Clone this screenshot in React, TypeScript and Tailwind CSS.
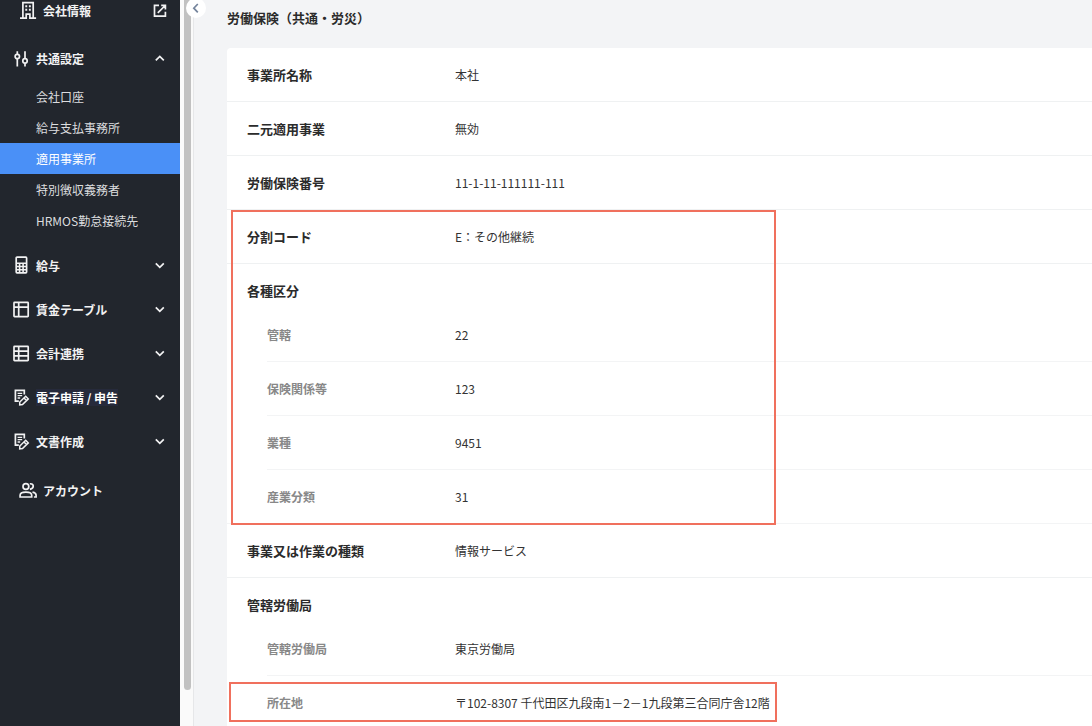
import React from 'react';

type IconProps = { children: React.ReactNode; className?: string };

const Icon: React.FC<IconProps> = ({ children, className = 'size-4' }) => (
  <svg
    viewBox="0 0 16 16"
    fill="none"
    stroke="currentColor"
    strokeWidth="1.7"
    aria-hidden="true"
    className={`shrink-0 overflow-visible ${className}`}
  >
    {children}
  </svg>
);

const BuildingIcon = () => (
  <Icon>
    <path d="M2.9 15V-.4h10.3V15M0 15.2h6.2v-4.1h3.7v4.1h6.2" />
    <path d="M5.3 3.2h1.9M8.9 3.2h1.9M5.3 6.8h1.9M8.9 6.8h1.9" strokeWidth="2" />
  </Icon>
);

const ExternalIcon = () => (
  <Icon>
    <path d="M7 2.3H2.5v10.9h10.9V8.7M9.2 2.3h4.2v4.2M13.2 2.5 5.8 9.9" />
  </Icon>
);

const TuneIcon = () => (
  <Icon>
    <path d="M4.3.3v2.9M4.3 8v7.4M12 .3v7.2M12 12.3v3.1" />
    <circle cx="4.3" cy="5.5" r="2.2" />
    <circle cx="12" cy="9.9" r="2.2" />
  </Icon>
);

const CalculatorIcon = () => (
  <Icon>
    <rect x="3.2" y="-.8" width="10.4" height="15.6" rx=".8" />
    <path d="M3 5.2h10.6M3 8.5h10.6M3 11.7h10.6M6.6 5.2v9.6M10.1 5.2v9.6" strokeWidth="1.6" />
  </Icon>
);

const TableIcon = () => (
  <Icon>
    <rect x="1" y=".4" width="14.2" height="14.2" rx=".6" />
    <path d="M1 5.1h14.2M5.7.4v14.2" />
  </Icon>
);

const ListIcon = () => (
  <Icon>
    <rect x="1" y=".4" width="14.2" height="14.2" rx=".6" />
    <path d="M1 5.1h14.2M1 9.8h14.2M5.7.4v14.2" />
  </Icon>
);

const DocumentIcon = () => (
  <Icon>
    <path d="M11.3 4.4V.4H2.4v10.7h3.4" />
    <path d="M4.6 3.4h4.6M4.6 5.7h4.6M4.6 8h2.6" strokeWidth="1.3" />
    <path d="m6.7 15 .1-3 5.9-5.7 2.6 2.6-5.8 5.7L6.7 15ZM11 8l2.5 2.5" strokeWidth="1.5" />
  </Icon>
);

const PeopleIcon = () => (
  <Icon>
    <circle cx="5.9" cy="3.5" r="2.9" />
    <path d="M.1 14v-1.7c0-2 3-3.1 5.8-3.1s5.8 1.1 5.8 3.1V14H.1Z" />
    <path d="M9.9.9c3.9-1 5 4.4 0 5.4M12.5 9.2c2.4.5 3.6 1.5 3.6 3V14h-2.2" />
  </Icon>
);

const Chevron = ({ up = false }: { up?: boolean }) => (
  <Icon>{up ? <path d="m3.8 9.4 4-4 4 4" /> : <path d="m3.8 5.4 4 4 4-4" />}</Icon>
);

const subItems = ['会社口座', '給与支払事務所', '適用事業所', '特別徴収義務者', 'HRMOS勤怠接続先'];

const menus = [
  { label: '給与', icon: <CalculatorIcon /> },
  { label: '賃金テーブル', icon: <TableIcon /> },
  { label: '会計連携', icon: <ListIcon /> },
  { label: '電子申請 / 申告', icon: <DocumentIcon />, highlighted: true },
  { label: '文書作成', icon: <DocumentIcon /> },
];

const Sidebar = () => (
  <nav className="w-[180px] shrink-0 bg-[#22262d] text-xs text-[#f2f2f3]">
    <a href="#company" className="flex h-[22px] items-center gap-[7px] pl-5 pr-3 font-bold">
      <BuildingIcon />
      <span className="flex-1">会社情報</span>
      <ExternalIcon />
    </a>
    <button type="button" aria-expanded="true" className="mt-[15px] flex h-11 w-full items-center gap-[7px] pl-[13px] pr-3 text-left font-bold">
      <TuneIcon />
      <span className="flex-1">共通設定</span>
      <Chevron up />
    </button>
    <ul>
      {subItems.map((item) => (
        <li key={item}>
          <a
            href="#office"
            className={`flex h-[31px] items-center pl-9 ${item === '適用事業所' ? 'bg-[#4a90f7] text-white' : 'text-[#dcdddf]'}`}
          >
            {item}
          </a>
        </li>
      ))}
    </ul>
    <div className="pt-2">
      {menus.map(({ label, icon, highlighted }) => (
        <button key={label} type="button" aria-expanded="false" className="flex h-11 w-full items-center gap-[7px] pl-[13px] pr-3 text-left font-bold">
          {icon}
          <span className="flex-1">
            <span className={highlighted ? 'bg-[#262a3b] text-white' : ''}>{label}</span>
          </span>
          <Chevron />
        </button>
      ))}
    </div>
    <a href="#account" className="mt-[5px] flex h-11 items-center gap-[7px] pl-5 pr-3 font-bold">
      <PeopleIcon />
      アカウント
    </a>
  </nav>
);

const Row = ({ label, value }: { label: string; value: string }) => (
  <dl className="flex h-[54px] items-center border-b border-[#eff1f2] pl-5">
    <dt className="w-52 shrink-0 text-[13px] font-bold">{label}</dt>
    <dd className="text-xs text-[#333]">{value}</dd>
  </dl>
);

const SubRow = ({ label, value, last = false }: { label: string; value: string; last?: boolean }) => (
  <dl className={`ml-10 flex h-[54px] items-center border-b text-xs ${last ? 'border-transparent' : 'border-[#f3f4f5]'}`}>
    <dt className="w-[188px] shrink-0 font-bold text-[#888]">{label}</dt>
    <dd className="whitespace-nowrap text-[#333]">{value}</dd>
  </dl>
);

const GroupTitle = ({ children }: { children: React.ReactNode }) => (
  <h2 className="flex h-11 items-center pl-5 pt-[10px] text-[13px] font-bold">{children}</h2>
);

const App: React.FC = () => {
  return (
    <div className="flex h-screen overflow-hidden bg-[#f3f4f6] font-['Noto_Sans_CJK_JP','Noto_Sans',sans-serif] text-[#2b2b2b]" lang="ja">
      <Sidebar />

      {/* sidebar scroll track and collapse button */}
      <div className="relative w-[14px] shrink-0 border-r border-[#e6e7e9] bg-[#fafafa] pl-1">
        <div className="h-[95%] w-[7px] rounded-b-full bg-[#c1c1c1]" />
        <button
          type="button"
          aria-label="メニューを閉じる"
          className="absolute -top-0.5 left-1.5 flex size-5 items-center justify-center rounded-full bg-white text-[#74849c]"
        >
          <svg viewBox="0 0 16 16" fill="none" stroke="currentColor" strokeWidth="1.7" className="size-4">
            <path d="m9.8 4-4 4.2 4 4.2" />
          </svg>
        </button>
      </div>

      <main className="min-w-0 flex-1 pl-[33px]">
        <h1 className="flex h-12 items-center pb-3 text-[13px] font-bold">労働保険（共通・労災）</h1>
        <section className="rounded-tl bg-white">
          <Row label="事業所名称" value="本社" />
          <Row label="二元適用事業" value="無効" />
          <Row label="労働保険番号" value="11-1-11-111111-111" />

          <div className="relative">
            <Row label="分割コード" value="E：その他継続" />
            <div className="border-b border-[#f3f4f5]">
              <GroupTitle>各種区分</GroupTitle>
              <SubRow label="管轄" value="22" />
              <SubRow label="保険関係等" value="123" />
              <SubRow label="業種" value="9451" />
              <div className="-mb-px">
                <SubRow label="産業分類" value="31" last />
              </div>
            </div>
            <div className="pointer-events-none absolute -bottom-px left-1 top-0 w-[545px] border-2 border-[#f0705d]" />
          </div>

          <Row label="事業又は作業の種類" value="情報サービス" />
          <GroupTitle>管轄労働局</GroupTitle>
          <SubRow label="管轄労働局" value="東京労働局" />
          <div className="relative">
            <SubRow label="所在地" value="〒102-8307 千代田区九段南1－2－1九段第三合同庁舎12階" last />
            <div className="pointer-events-none absolute bottom-2 left-0.5 top-1.5 w-[548px] border-2 border-[#f0705d]" />
          </div>
        </section>
      </main>
    </div>
  );
};

export default App;
